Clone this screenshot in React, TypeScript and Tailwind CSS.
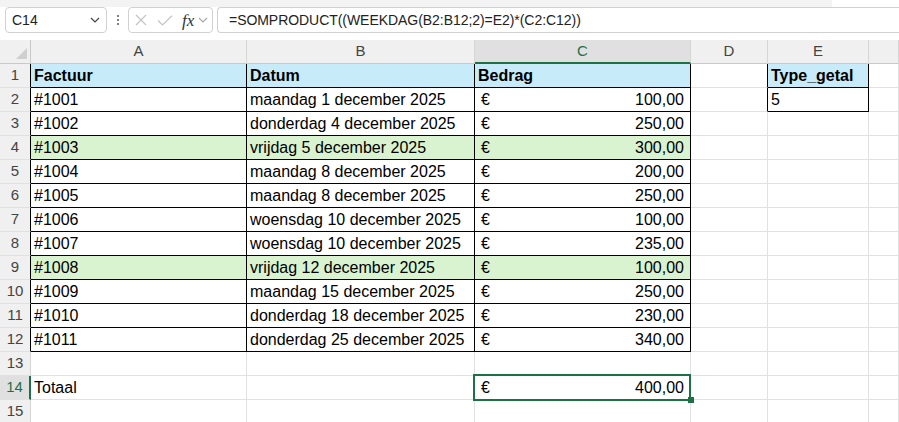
import React from "react";

const FONT = { fontFamily: '"Liberation Sans", Arial, sans-serif' };

const COLS = [
  { key: "A", w: "w-[216px]" },
  { key: "B", w: "w-[228px]" },
  { key: "C", w: "w-[216px]" },
  { key: "D", w: "w-[77px]" },
  { key: "E", w: "w-[101px]" },
  { key: "F", w: "flex-1" },
];

type Row = { id: string; date: string; amount: string; green?: boolean };

const rows: Row[] = [
  { id: "#1001", date: "maandag 1 december 2025", amount: "100,00" },
  { id: "#1002", date: "donderdag 4 december 2025", amount: "250,00" },
  { id: "#1003", date: "vrijdag 5 december 2025", amount: "300,00", green: true },
  { id: "#1004", date: "maandag 8 december 2025", amount: "200,00" },
  { id: "#1005", date: "maandag 8 december 2025", amount: "250,00" },
  { id: "#1006", date: "woensdag 10 december 2025", amount: "100,00" },
  { id: "#1007", date: "woensdag 10 december 2025", amount: "235,00" },
  { id: "#1008", date: "vrijdag 12 december 2025", amount: "100,00", green: true },
  { id: "#1009", date: "maandag 15 december 2025", amount: "250,00" },
  { id: "#1010", date: "donderdag 18 december 2025", amount: "230,00" },
  { id: "#1011", date: "donderdag 25 december 2025", amount: "340,00" },
];

function Chevron({ className }: { className?: string }) {
  return (
    <svg width="10" height="6" viewBox="0 0 10 6" className={className}>
      <path d="M1 1 L5 5 L9 1" fill="none" stroke="currentColor" strokeWidth="1.2" />
    </svg>
  );
}

function Toolbar() {
  return (
    <div className="h-[40px] flex flex-col">
      <div className="h-[7px] w-[832px] bg-[#f3f3f3]" />
      <div className="flex h-[26px] items-stretch">
        <div className="ml-[5px] w-[102px] rounded-[4px] border border-[#d1d1d1] flex items-center justify-between pl-[6px] pr-[6px] bg-white">
          <span className="text-[14px] text-[#222]">C14</span>
          <Chevron className="text-[#444]" />
        </div>
        <div className="w-[21px] flex flex-col items-center justify-center gap-[2px]">
          <span className="w-[2px] h-[2px] bg-[#555] rounded-full" />
          <span className="w-[2px] h-[2px] bg-[#555] rounded-full" />
          <span className="w-[2px] h-[2px] bg-[#555] rounded-full" />
        </div>
        <div className="w-[85px] rounded-[4px] border border-[#d1d1d1] flex items-center pl-[6px] bg-white">
          <svg width="12" height="12" viewBox="0 0 12 12" className="text-[#c4c4c4]">
            <path d="M1 1 L11 11 M11 1 L1 11" stroke="currentColor" strokeWidth="1.2" />
          </svg>
          <svg width="16" height="11" viewBox="0 0 16 11" className="ml-[10px] text-[#c4c4c4]">
            <path d="M1 5.5 L5.5 10 L15 0.8" fill="none" stroke="currentColor" strokeWidth="1.2" />
          </svg>
          <span
            className="ml-[9px] italic text-[17px] leading-none text-[#333]"
            style={{ fontFamily: '"Liberation Serif", "Times New Roman", serif' }}
          >
            fx
          </span>
          <Chevron className="ml-[4px] text-[#a8a8a8]" />
        </div>
        <div className="ml-[4px] flex-1 border-y border-l border-[#d1d1d1] rounded-l-[4px] flex items-center pl-[11px] bg-white">
          <span className="text-[14px] text-[#222] whitespace-nowrap tracking-[-0.05px]">
            =SOMPRODUCT((WEEKDAG(B2:B12;2)=E2)*(C2:C12))
          </span>
        </div>
      </div>
    </div>
  );
}

function HeaderRow() {
  return (
    <div className="flex h-[24px] bg-[#f0f0f0]">
      <div className="w-[31px] border-r border-b border-[#c8c8c8] flex items-end justify-end pr-[3px] pb-[4px]">
        <svg width="11" height="11" viewBox="0 0 11 11">
          <path d="M11 0 L11 11 L0 11 Z" fill="#cfcfcf" />
        </svg>
      </div>
      {COLS.map((c) => {
        const sel = c.key === "C";
        return (
          <div
            key={c.key}
            className={`${c.w} border-r border-[#d6d6d6] flex items-center justify-center text-[15px] ${
              sel
                ? "bg-[#e0e0e0] border-b-2 border-b-[#1e7145] text-[#1e7145]"
                : "border-b border-b-[#c8c8c8] text-[#444]"
            }`}
          >
            {c.key !== "F" ? c.key : ""}
          </div>
        );
      })}
    </div>
  );
}

type CellSpec = {
  content?: React.ReactNode;
  bg?: string;
  br?: string;
  bb?: string;
  bold?: boolean;
  extra?: React.ReactNode;
};

function GridRow({ n, cells, selected }: { n: number; cells: CellSpec[]; selected?: boolean }) {
  const inTable = n <= 12;
  return (
    <div className="flex h-[24px]">
      <div
        className={`w-[31px] border-b border-b-[#e1e1e1] flex items-center justify-center text-[15px] ${
          selected
            ? "bg-[#e0e0e0] border-r-2 border-r-[#1e7145] text-[#1e7145]"
            : `bg-[#f0f0f0] border-r text-[#444] ${inTable ? "border-r-black" : "border-r-[#d6d6d6]"}`
        }`}
      >
        {n}
      </div>
      {COLS.map((c, i) => {
        const s = cells[i] || {};
        return (
          <div
            key={c.key}
            className={`relative ${c.w} border-r border-b ${s.br || "border-r-[#e1e1e1]"} ${
              s.bb || "border-b-[#e1e1e1]"
            } ${s.bg || ""} ${s.bold ? "font-bold" : ""} text-[16px] leading-[23px] text-black whitespace-nowrap overflow-visible ${
              s.extra ? "z-10" : ""
            }`}
          >
            {s.content}
            {s.extra}
          </div>
        );
      })}
    </div>
  );
}

function Money({ v }: { v: string }) {
  return (
    <div className="flex justify-between pl-[6px] pr-[6px]">
      <span>€</span>
      <span>{v}</span>
    </div>
  );
}

const BLUE = "bg-[#c8ebfa]";
const GREEN = "bg-[#d9f2d0]";
const BLK_R = "border-r-black";
const BLK_B = "border-b-black";

export default function App() {
  const tableRows: CellSpec[][] = [];
  // row 1: headers
  tableRows.push([
    { content: <span className="pl-[3px]">Factuur</span>, bg: BLUE, br: BLK_R, bb: BLK_B, bold: true },
    { content: <span className="pl-[3px]">Datum</span>, bg: BLUE, br: BLK_R, bb: BLK_B, bold: true },
    { content: <span className="pl-[3px]">Bedrag</span>, bg: BLUE, br: BLK_R, bb: BLK_B, bold: true },
    { br: BLK_R },
    { content: <span className="pl-[3px]">Type_getal</span>, bg: BLUE, br: BLK_R, bb: BLK_B, bold: true },
    {},
  ]);
  rows.forEach((r, idx) => {
    const bg = r.green ? GREEN : "";
    tableRows.push([
      { content: <span className="pl-[3px]">{r.id}</span>, bg, br: BLK_R, bb: BLK_B },
      { content: <span className="pl-[3px]">{r.date}</span>, bg, br: BLK_R, bb: BLK_B },
      { content: <Money v={r.amount} />, bg, br: BLK_R, bb: BLK_B },
      idx === 0 ? { br: BLK_R } : {},
      idx === 0 ? { content: <span className="pl-[3px]">5</span>, br: BLK_R, bb: BLK_B } : {},
      {},
    ]);
  });
  // row 13
  tableRows.push([{}, {}, {}, {}, {}, {}]);
  // row 14: total, C14 selected
  tableRows.push([
    { content: <span className="pl-[3px]">Totaal</span> },
    {},
    {
      content: <Money v="400,00" />,
      extra: (
        <>
          <div className="absolute left-[-2px] top-[-2px] w-[218px] h-[27px] border-2 border-[#1e7145] pointer-events-none" />
          <div className="absolute left-[213px] top-[21px] w-[6px] h-[6px] bg-[#1e7145]" />
        </>
      ),
    },
    {},
    {},
    {},
  ]);
  tableRows.push([{}, {}, {}, {}, {}, {}]);

  return (
    <div className="w-[899px] h-[422px] overflow-hidden bg-white" style={FONT}>
      <Toolbar />
      <HeaderRow />
      {tableRows.map((cells, i) => (
        <GridRow key={i} n={i + 1} cells={cells} selected={i + 1 === 14} />
      ))}
    </div>
  );
}
